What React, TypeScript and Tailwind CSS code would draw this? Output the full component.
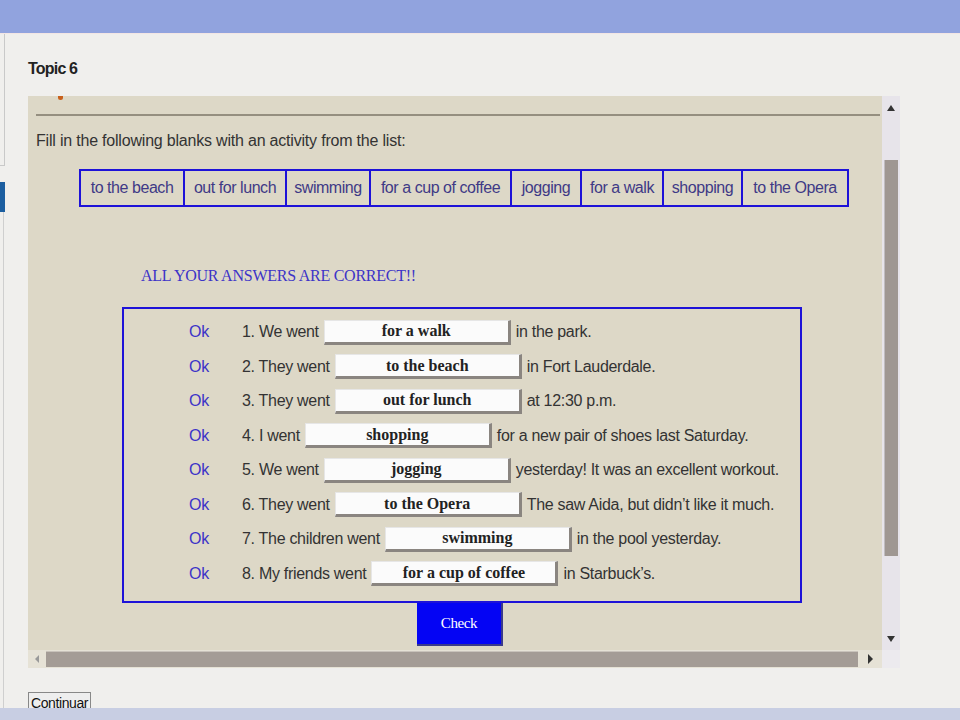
import React from 'react'

const words = [
  { w: 'to the beach', width: 102 },
  { w: 'out for lunch', width: 102 },
  { w: 'swimming', width: 84 },
  { w: 'for a cup of coffee', width: 141 },
  { w: 'jogging', width: 70 },
  { w: 'for a walk', width: 82 },
  { w: 'shopping', width: 79 },
  { w: 'to the Opera', width: 106 },
]

const answers = [
  { pre: '1. We went', ans: 'for a walk', post: 'in the park.' },
  { pre: '2. They went', ans: 'to the beach', post: 'in Fort Lauderdale.' },
  { pre: '3. They went', ans: 'out for lunch', post: 'at 12:30 p.m.' },
  { pre: '4. I went', ans: 'shopping', post: 'for a new pair of shoes last Saturday.' },
  { pre: '5. We went', ans: 'jogging', post: 'yesterday! It was an excellent workout.' },
  { pre: '6. They went', ans: 'to the Opera', post: 'The saw Aida, but didn\u2019t like it much.' },
  { pre: '7. The children went', ans: 'swimming', post: 'in the pool yesterday.' },
  { pre: '8. My friends went', ans: 'for a cup of coffee', post: 'in Starbuck\u2019s.' },
]

export default function App() {
  return (
    <div className="w-[960px] h-[720px] bg-[#f0efed] overflow-hidden flex flex-col font-['Liberation_Sans',Arial,sans-serif] text-[#333]">
      {/* top bar */}
      <div className="h-[34px] bg-[#91a3de] shrink-0 border-b border-[#f3e6e4]" />

      <div className="flex flex-1 min-h-0">
        {/* left edge strip */}
        <div className="w-[6px] shrink-0 flex flex-col">
          <div className="h-[132px] border-r border-b border-[#c9c9c9] w-[5px]" />
          <div className="mt-[16px] h-[30px] w-[5px] bg-[#1c5ea0]" />
          <div className="flex-1 border-r border-[#cfcfcf] w-[4px]" />
        </div>

        {/* main */}
        <div className="flex-1 pl-[22px] flex flex-col">
          <div className="mt-[25px] h-[19px] text-[16px] font-bold text-[#222] leading-[19px] tracking-[-0.8px]">Topic 6</div>

          {/* framed panel */}
          <div className="mt-[18px] w-[872px] h-[572px] flex flex-col bg-[#ddd8c7]">
            <div className="flex flex-1 min-h-0">
              <div className="w-[854px] flex flex-col overflow-hidden">
                <div className="h-[18px] relative">
                  <div className="absolute left-[30px] top-[0px] w-[5px] h-[4px] rounded-b-full bg-[#c8601c]" />
                </div>
                <div className="ml-[8px] w-[844px] h-[2px] bg-[#958f80]" />
                <div className="mt-[16px] ml-[8px] text-[16px] leading-[18px] tracking-[-0.2px] text-[#333]">
                  Fill in the following blanks with an activity from the list:
                </div>
                {/* word list */}
                <div className="mt-[19px] ml-[51px] flex self-start border-2 border-[#1d12d8] h-[38px]">
                  {words.map((item, i) => (
                    <div
                      key={item.w}
                      className={`flex items-center justify-center text-[16px] tracking-[-0.45px] text-[#3f3a86] ${i > 0 ? 'border-l-2 border-[#1d12d8]' : ''}`}
                      style={{ width: item.width }}
                    >
                      {item.w}
                    </div>
                  ))}
                </div>

                <div className="mt-[59px] ml-[113px] text-[16px] leading-[20px] text-[#3c33c8] font-['Liberation_Serif','Times_New_Roman',serif] tracking-[-0.25px]">
                  ALL YOUR ANSWERS ARE CORRECT!!
                </div>

                {/* answers */}
                <div className="mt-[21px] ml-[94px] w-[680px] h-[296px] border-2 border-[#1d12d8] pt-[6px] flex flex-col">
                  {answers.map((a) => (
                    <div key={a.pre} className="h-[34.5px] flex items-center text-[16px] tracking-[-0.3px]">
                      <div className="w-[118px] pl-[65px] text-[#3c33c8]">Ok</div>
                      <span className="text-[#333]">{a.pre}</span>
                      <div className="ml-[5px] w-[187px] h-[25px] bg-[#fbfbfb] border-t border-l border-[#e6e6e6] border-b-[3px] border-r-[3px] border-b-[#8a8580] border-r-[#8a8580] flex items-center justify-center font-['Liberation_Serif','Times_New_Roman',serif] font-bold text-[16px] tracking-normal text-[#222]">
                        {a.ans}
                      </div>
                      <span className="ml-[5px] text-[#333]">{a.post}</span>
                    </div>
                  ))}
                </div>

                {/* check button */}
                <div className="ml-[389px] w-[86px] h-[43px] bg-[#0404f4] border-b-2 border-r-2 border-[#3a3a8a] flex items-center justify-center text-white text-[15px] font-['Liberation_Serif','Times_New_Roman',serif] tracking-[-0.4px]">
                  Check
                </div>
              </div>

              {/* vertical scrollbar */}
              <div className="w-[18px] bg-[#e7e4ea] flex flex-col items-center">
                <div className="mt-[7px] h-[10px] flex items-center justify-center">
                  <div className="w-0 h-0 border-l-[4px] border-r-[4px] border-b-[6px] border-l-transparent border-r-transparent border-b-[#333]" />
                </div>
                <div className="mt-[47px] w-[14px] h-[396px] bg-[#9f9792] border-l border-[#c0bcc0]" />
                <div className="flex-1" />
                <div className="mb-[6px] h-[10px] flex items-center justify-center">
                  <div className="w-0 h-0 border-l-[4px] border-r-[4px] border-t-[6px] border-l-transparent border-r-transparent border-t-[#333]" />
                </div>
              </div>
            </div>

            {/* horizontal scrollbar */}
            <div className="h-[18px] flex items-center bg-[#e6e2d6]">
              <div className="w-[18px] flex justify-center">
                <div className="w-0 h-0 border-t-[4px] border-b-[4px] border-r-[4px] border-t-transparent border-b-transparent border-r-[#999]" />
              </div>
              <div className="w-[812px] h-[16px] bg-[#a49c96] border-t border-[#c9c3bb]" />
              <div className="w-[24px] flex justify-center">
                <div className="w-0 h-0 border-t-[5px] border-b-[5px] border-l-[5px] border-t-transparent border-b-transparent border-l-[#333]" />
              </div>
              <div className="flex-1 h-full bg-[#eceaee]" />
            </div>
          </div>

          <div className="mt-[24px] self-start h-[22px] px-[2px] border border-[#888] bg-[#eeeeee] text-[14px] leading-[20px] text-[#111] tracking-[-0.4px]">
            Continuar
          </div>
        </div>
      </div>
      <div className="h-[12px] bg-[#c8cee3] shrink-0 -mt-[12px] relative" />
    </div>
  )
}
